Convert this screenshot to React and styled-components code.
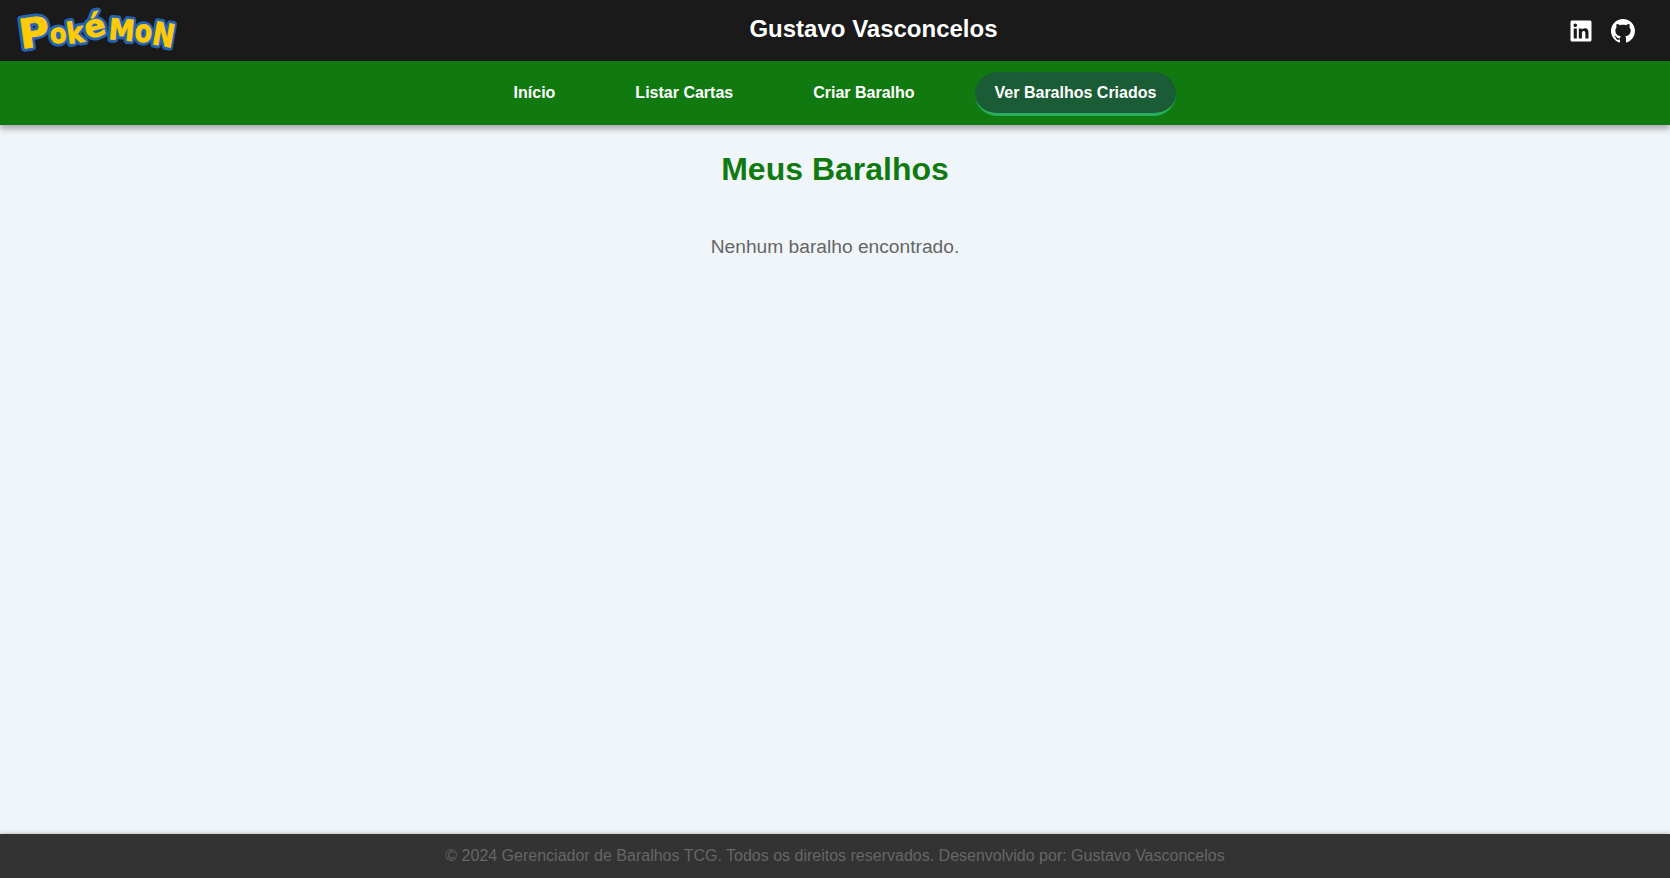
import styled, { createGlobalStyle } from "styled-components";
import { FaLinkedin } from "react-icons/fa";
import { BsGithub } from "react-icons/bs";

const GlobalStyle = createGlobalStyle`
  * {
    box-sizing: border-box;
  }

  body {
    margin: 0;
    background-color: #f0f5f9;
    font-family: "Liberation Sans", Arial, sans-serif;
  }
`

const Page = styled.div`
  display: flex;
  flex-direction: column;
  min-height: 878px;
`

const TopBar = styled.header`
  display: flex;
  align-items: center;
  justify-content: space-between;
  height: 61px;
  padding: 0 35px 0 16px;
  background-color: #1a1a1a;
`

const Logo = styled.svg`
  display: block;
  width: 162px;
  height: 50px;
  overflow: visible;

  text {
    font-family: "DejaVu Sans", sans-serif;
    font-weight: 700;
    stroke-linejoin: round;
  }

  .outline text {
    fill: #2464b4;
    stroke: #2464b4;
    stroke-width: 6.5px;
  }

  .face text {
    fill: #ffcb05;
    stroke: #ffcb05;
    stroke-width: 0.8px;
  }
`

const OwnerName = styled.h2`
  margin: 0 0 3px;
  color: #fff;
  font-size: 24px;
  font-weight: 700;
`

const SocialLinks = styled.div`
  display: flex;
  align-items: center;
  gap: 18px;

  a {
    display: flex;
    color: #fff;
    font-size: 24px;
  }
`

const NavBar = styled.nav`
  position: relative;
  display: flex;
  align-items: center;
  justify-content: center;
  gap: 40px;
  height: 64px;
  background-color: #107a10;
  box-shadow: 0 4px 6px rgba(0, 0, 0, 0.3);
`

const NavLink = styled.a`
  margin-top: 2px;
  padding: 11px 20px;
  border-bottom: 3px solid ${props => (props.$active ? "#27ae60" : "transparent")};
  border-radius: 24px;
  background-color: ${props => (props.$active ? "#1a5c35" : "transparent")};
  color: #fff;
  font-size: 16px;
  font-weight: 700;
  line-height: 19px;
`

const Content = styled.main`
  flex: 1;
  text-align: center;
  padding-top: 26px;

  h1 {
    margin: 0;
    color: #107a10;
    font-size: 32px;
    line-height: 37px;
    font-weight: 700;
  }

  p {
    margin: 48px 0 0;
    color: #666;
    font-size: 19.2px;
    line-height: 22px;
  }
`

const Footer = styled.footer`
  height: 44px;
  padding-top: 13px;
  background-color: #333;
  box-shadow: 0 -1px 4px rgba(0, 0, 0, 0.2);
  color: #666;
  font-size: 16px;
  line-height: 18px;
  text-align: center;
`

const logoLetters = [
  { char: "P", x: 5, y: 43, size: 41, sx: 1.02, rotate: -8 },
  { char: "o", x: 35, y: 38, size: 27, sx: 0.9, rotate: -8 },
  { char: "k", x: 52, y: 38, size: 29, sx: 0.9, rotate: -8 },
  { char: "é", x: 71, y: 33, size: 31, sx: 1, rotate: -14 },
  { char: "M", x: 92, y: 33, size: 29, sx: 0.9, rotate: 5 },
  { char: "o", x: 118, y: 35, size: 31, sx: 0.82, rotate: 5 },
  { char: "N", x: 135, y: 38, size: 32, sx: 0.82, rotate: 10 },
]

function LogoLetters({ className }) {
  return (
    <g className={className}>
      {logoLetters.map((letter, i) => (
        <text
          key={i}
          fontSize={letter.size}
          transform={`translate(${letter.x} ${letter.y}) rotate(${letter.rotate}) scale(${letter.sx} 1)`}
        >
          {letter.char}
        </text>
      ))}
    </g>
  )
}

export default function App() {
  return (
    <Page>
      <GlobalStyle />

      <TopBar>
        <Logo viewBox="0 0 162 50" role="img" aria-label="Pokémon">
          <LogoLetters className="outline" />
          <LogoLetters className="face" />
        </Logo>

        <OwnerName>Gustavo Vasconcelos</OwnerName>

        <SocialLinks>
          <a href="#linkedin" aria-label="LinkedIn"><FaLinkedin /></a>
          <a href="#github" aria-label="GitHub"><BsGithub /></a>
        </SocialLinks>
      </TopBar>

      <NavBar>
        <NavLink>Início</NavLink>
        <NavLink>Listar Cartas</NavLink>
        <NavLink>Criar Baralho</NavLink>
        <NavLink $active>Ver Baralhos Criados</NavLink>
      </NavBar>

      <Content>
        <h1>Meus Baralhos</h1>
        <p>Nenhum baralho encontrado.</p>
      </Content>

      <Footer>© 2024 Gerenciador de Baralhos TCG. Todos os direitos reservados. Desenvolvido por: Gustavo Vasconcelos</Footer>
    </Page>
  );
}
